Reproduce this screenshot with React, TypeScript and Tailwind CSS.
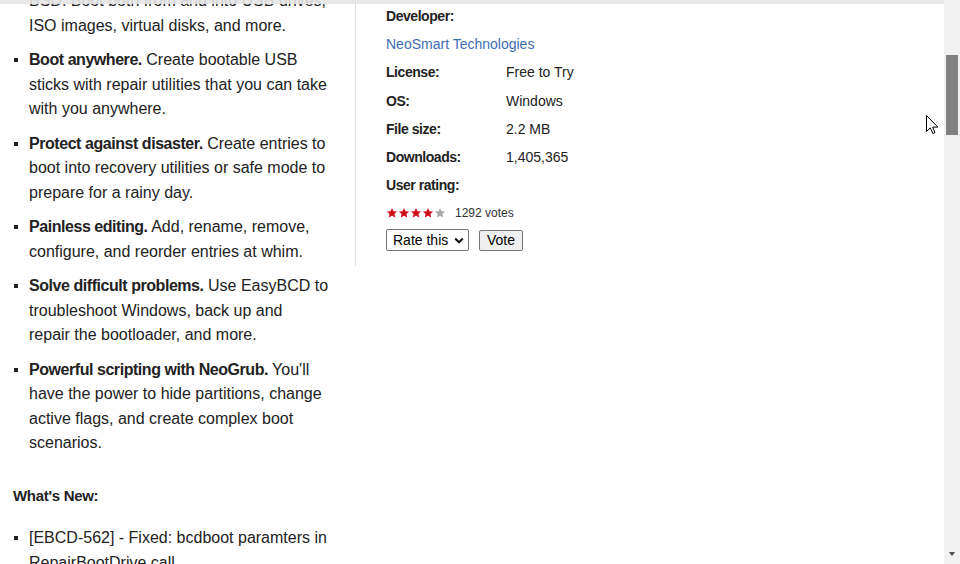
import type { ReactNode } from "react";

const features: { title: string; text: ReactNode }[] = [
  {
    title: "Boot anywhere.",
    text: "Create bootable USB sticks with repair utilities that you can take with you anywhere.",
  },
  {
    title: "Protect against disaster.",
    text: "Create entries to boot into recovery utilities or safe mode to prepare for a rainy day.",
  },
  {
    title: "Painless editing.",
    text: "Add, rename, remove, configure, and reorder entries at whim.",
  },
  {
    title: "Solve difficult problems.",
    text: (
      <>
        Use EasyBCD to troubleshoot Windows, back up and
        <br />
        repair the bootloader, and more.
      </>
    ),
  },
  {
    title: "Powerful scripting with NeoGrub.",
    text: "You'll have the power to hide partitions, change active flags, and create complex boot scenarios.",
  },
];

const details = [
  { label: "License:", value: "Free to Try" },
  { label: "OS:", value: "Windows" },
  { label: "File size:", value: "2.2 MB" },
  { label: "Downloads:", value: "1,405,365" },
];

function Bullet() {
  return (
    <span className="flex h-[24.6px] w-[16px] shrink-0 items-center">
      <span className="ml-px block h-[4px] w-[4px] bg-[#222]" />
    </span>
  );
}

function Star({ filled }: { filled: boolean }) {
  return (
    <svg viewBox="0 0 24 24" className="h-[12px] w-[12px]">
      <path
        d="M12 1.8l3.1 6.6 7.1.8-5.3 4.9 1.5 7.1L12 17.6l-6.4 3.6 1.5-7.1L1.8 9.2l7.1-.8z"
        fill={filled ? "#d2111d" : "#a8a8a8"}
      />
    </svg>
  );
}

function Description() {
  return (
    <div className="w-[355px] shrink-0 -mt-[11px] pl-[13px] text-[16px] leading-[24.6px] text-[#222]">
      <div className="flex">
        <span className="w-[16px] shrink-0" />
        <p className="w-[304px]">BSD. Boot both from and into USB drives, ISO images, virtual disks, and more.</p>
      </div>
      <ul className="mt-[9.8px] flex flex-col gap-[9.8px]">
        {features.map((f) => (
          <li key={f.title} className="flex">
            <Bullet />
            <p className="w-[304px]">
              <b className="tracking-[-0.45px]">{f.title}</b> {f.text}
            </p>
          </li>
        ))}
      </ul>
      <h3 className="mt-[28px] text-[15px] font-bold leading-[24px] tracking-[-0.3px]">What's New:</h3>
      <ul className="mt-[18px]">
        <li className="flex">
          <Bullet />
          <p className="w-[304px]">[EBCD-562] - Fixed: bcdboot paramters in RepairBootDrive call</p>
        </li>
      </ul>
    </div>
  );
}

function InfoPanel() {
  return (
    <div className="self-start border-l border-[#dcdcdc] pl-[30px] pt-[2px] pb-[15px] text-[14px] leading-[28.2px] text-[#222]">
      <p className="font-bold tracking-[-0.45px]">Developer:</p>
      <a href="#" className="block text-[#3b6db3]">
        NeoSmart Technologies
      </a>
      {details.map((d) => (
        <div key={d.label} className="flex">
          <span className="w-[120px] font-bold tracking-[-0.45px]">{d.label}</span>
          <span>{d.value}</span>
        </div>
      ))}
      <p className="font-bold tracking-[-0.45px]">User rating:</p>
      <div className="flex h-[28px] items-center">
        <div className="flex">
          <Star filled />
          <Star filled />
          <Star filled />
          <Star filled />
          <Star filled={false} />
        </div>
        <span className="ml-[9px] text-[12px] text-[#333]">1292 votes</span>
      </div>
      <div className="mt-[2px] flex items-center gap-[10px]">
        <div className="relative flex">
          <select className="h-[22px] w-[83px] appearance-none rounded-[2px] border border-[#767676] bg-white pl-[6px] text-[14px] leading-[20px] text-black">
            <option>Rate this</option>
            <option>5</option>
            <option>4</option>
            <option>3</option>
            <option>2</option>
            <option>1</option>
          </select>
          <svg viewBox="0 0 10 7" className="pointer-events-none absolute right-[5px] top-[8px] h-[7px] w-[10px]">
            <path d="M1.2 1.5l3.8 3.8 3.8-3.8" fill="none" stroke="#111" strokeWidth="2" />
          </svg>
        </div>
        <button className="h-[21px] rounded-[2px] border border-[#767676] bg-[#efefef] px-[7px] text-[14px] leading-[19px] text-black">
          Vote
        </button>
      </div>
    </div>
  );
}

function Scrollbar() {
  return (
    <div className="relative flex w-[16px] shrink-0 flex-col bg-[#f1f1f1]">
      <div className="mx-[2px] mt-[55px] h-[80px] bg-[#808080]" />
      <svg viewBox="0 0 8 5" className="absolute bottom-[8px] left-[4px] h-[4px] w-[8px]">
        <path d="M0 0h8L4 5z" fill="#505050" />
      </svg>
    </div>
  );
}

function Cursor() {
  return (
    <svg viewBox="0 0 12 19" className="absolute left-[926px] top-[115px] h-[19px] w-[12px]">
      <path
        d="M0.5 0.5v16l3.8-3.6 2.5 5.6 2.2-1-2.4-5.4h5.3z"
        fill="#fff"
        stroke="#000"
        strokeWidth="1"
        strokeLinejoin="round"
      />
    </svg>
  );
}

export default function App() {
  return (
    <div
      className="relative flex h-[564px] w-[960px] overflow-hidden bg-white"
      style={{ fontFamily: '"Liberation Sans", Arial, sans-serif' }}
    >
      <main className="relative flex flex-1 overflow-hidden">
        <Description />
        <InfoPanel />
        <div className="absolute inset-x-0 top-0 h-[4px] bg-[#e6e6e6]/90" />
      </main>
      <Scrollbar />
      <Cursor />
    </div>
  );
}
